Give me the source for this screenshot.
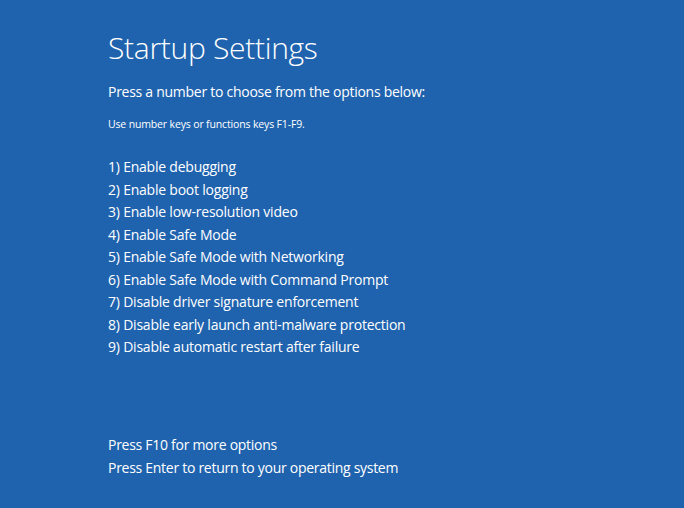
import React from 'react'

const options = [
    'Enable debugging',
    'Enable boot logging',
    'Enable low-resolution video',
    'Enable Safe Mode',
    'Enable Safe Mode with Networking',
    'Enable Safe Mode with Command Prompt',
    'Disable driver signature enforcement',
    'Disable early launch anti-malware protection',
    'Disable automatic restart after failure',
]

const App: React.FC = () => {
    return (
        <div
            className="w-[684px] h-[508px] bg-[#1f63ae] text-white pl-[108px] pt-[28px] overflow-hidden"
            style={{ fontFamily: '"Open Sans", "Noto Sans", sans-serif' }}
        >
            {/* Title */}
            <h1 className="text-[30px] leading-[40px] font-light tracking-[-0.3px]">Startup Settings</h1>

            {/* Instructions */}
            <p className="mt-[13px] text-[14px] leading-[22px] tracking-[-0.27px]">
                Press a number to choose from the options below:
            </p>
            <p className="mt-[13px] text-[10.5px] leading-[16px] tracking-[-0.15px]">
                Use number keys or functions keys F1-F9.
            </p>

            {/* Options */}
            <ul className="mt-[24px] text-[14px] leading-[22.5px] tracking-[-0.22px]">
                {options.map((label, i) => (
                    <li key={label}>
                        {i + 1}) {label}
                    </li>
                ))}
            </ul>

            {/* Footer */}
            <div className="mt-[74px] text-[14px] leading-[23px] tracking-[-0.28px]">
                <p>Press F10 for more options</p>
                <p>Press Enter to return to your operating system</p>
            </div>
        </div>
    )
}

export default App
